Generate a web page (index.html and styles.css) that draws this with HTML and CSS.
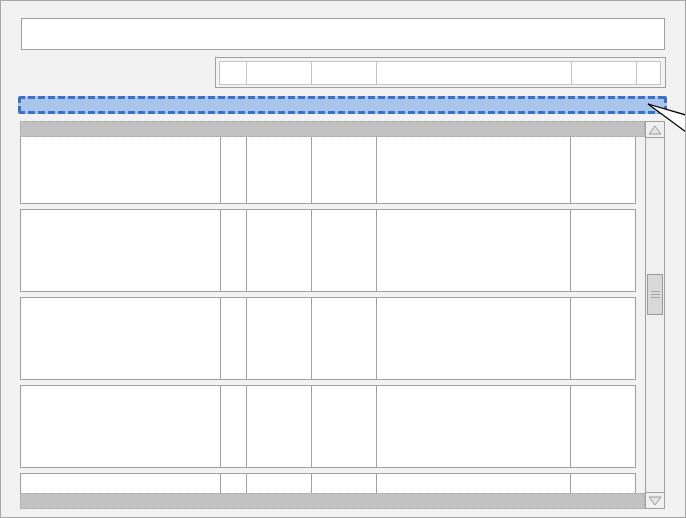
FILE: index.html
```html
<!DOCTYPE html>
<html lang="en">
<head>
    <meta charset="UTF-8">
    <title>Grid Layout</title>
    <link rel="stylesheet" href="styles.css">
</head>
<body>
    <div class="frame">
        <div class="title-box"></div>

        <div class="header-wrap">
            <div class="header-row">
                <div class="hcell w27"></div>
                <div class="hcell w64"></div>
                <div class="hcell w65"></div>
                <div class="hcell w195"></div>
                <div class="hcell w65"></div>
                <div class="hcell fill"></div>
            </div>
        </div>

        <div class="selection"></div>

        <div class="grid">
            <div class="grid-main">
                <div class="strip"></div>
                <div class="grid-body">
                    <div class="row first">
                        <div class="cell c1"></div><div class="cell c2"></div><div class="cell c3"></div><div class="cell c4"></div><div class="cell c5"></div><div class="cell c6"></div>
                    </div>
                    <div class="row">
                        <div class="cell c1"></div><div class="cell c2"></div><div class="cell c3"></div><div class="cell c4"></div><div class="cell c5"></div><div class="cell c6"></div>
                    </div>
                    <div class="row">
                        <div class="cell c1"></div><div class="cell c2"></div><div class="cell c3"></div><div class="cell c4"></div><div class="cell c5"></div><div class="cell c6"></div>
                    </div>
                    <div class="row">
                        <div class="cell c1"></div><div class="cell c2"></div><div class="cell c3"></div><div class="cell c4"></div><div class="cell c5"></div><div class="cell c6"></div>
                    </div>
                    <div class="row">
                        <div class="cell c1"></div><div class="cell c2"></div><div class="cell c3"></div><div class="cell c4"></div><div class="cell c5"></div><div class="cell c6"></div>
                    </div>
                </div>
                <div class="strip"></div>
            </div>

            <div class="scrollbar">
                <div class="sb-btn top">
                    <svg width="14" height="10" viewBox="0 0 14 10"><polygon points="7,1 13,9 1,9" fill="#e4e4e4" stroke="#9a9a9a" stroke-width="1"/></svg>
                </div>
                <div class="sb-track">
                    <div class="thumb">
                        <span></span><span></span><span></span>
                    </div>
                </div>
                <div class="sb-btn bottom">
                    <svg width="14" height="10" viewBox="0 0 14 10"><polygon points="1,1 13,1 7,9" fill="#e4e4e4" stroke="#9a9a9a" stroke-width="1"/></svg>
                </div>
            </div>
        </div>

        <!-- callout pointer -->
        <svg class="pointer" width="40" height="32" viewBox="0 0 40 32">
            <polygon points="2,2 40,13 40,30" fill="#fff" stroke="#000" stroke-width="1.3"/>
        </svg>
    </div>
</body>
</html>
```

FILE: styles.css
```css
* {
    margin: 0;
    padding: 0;
    box-sizing: border-box;
}

body {
    font-family: 'Liberation Sans', Arial, sans-serif;
    background: #f0f0f0;
}

.frame {
    position: relative;
    width: 686px;
    height: 518px;
    border: 1px solid #a6a6a6;
    background: #f2f2f2;
    overflow: hidden;
}

.title-box {
    height: 32px;
    margin: 17px 20px 0 20px;
    background: #fff;
    border: 1px solid #a0a0a0;
}

.header-wrap {
    width: 451px;
    height: 31px;
    margin: 7px 19px 0 auto;
    border: 1px solid #a0a0a0;
    padding: 3px 4px 2px 3px;
}

.header-row {
    display: flex;
    height: 24px;
    background: #fff;
    border: 1px solid #c4c4c4;
}

.hcell {
    height: 100%;
    border-left: 1px solid #c4c4c4;
}

.hcell:first-child {
    border-left: none;
}

.w27 { width: 26px; }
.w64 { width: 65px; }
.w65 { width: 65px; }
.w195 { width: 195px; }
.fill { flex: 1; }

/* dashed selection, drawn with gradients so the dashes are thick and long */
.selection {
    width: 649px;
    height: 18px;
    margin: 8px 0 0 17px;
    border-radius: 2px;
    background:
        repeating-linear-gradient(90deg, #3a72c8 0 7px, transparent 7px 10px) left top / 100% 3px no-repeat,
        repeating-linear-gradient(90deg, #3a72c8 0 7px, transparent 7px 10px) left bottom / 100% 3px no-repeat,
        repeating-linear-gradient(180deg, #3a72c8 0 7px, transparent 7px 10px) left top / 3px 100% no-repeat,
        repeating-linear-gradient(180deg, #3a72c8 0 7px, transparent 7px 10px) right top / 3px 100% no-repeat,
        #aac5eb;
}

.grid {
    display: flex;
    width: 645px;
    height: 388px;
    margin: 7px 0 0 19px;
}

.grid-main {
    display: flex;
    flex-direction: column;
    width: 625px;
}

.strip {
    height: 16px;
    background: #c2c2c2;
    border: 1px dotted #a4a4a4;
}

.grid-body {
    height: 356px;
    overflow: hidden;
    display: flex;
    flex-direction: column;
    gap: 5px;
}

.row {
    display: flex;
    flex-shrink: 0;
    width: 616px;
    height: 83px;
    background: #fff;
    border: 1px solid #a0a0a0;
}

.row.first {
    margin-top: -16px;
}

.cell {
    height: 100%;
    border-left: 1px solid #a0a0a0;
}

.cell.c1 { width: 199px; border-left: none; }
.cell.c2 { width: 26px; }
.cell.c3 { width: 65px; }
.cell.c4 { width: 65px; }
.cell.c5 { width: 194px; }
.cell.c6 { flex: 1; }

.scrollbar {
    display: flex;
    flex-direction: column;
    width: 20px;
    background: #f0f0f0;
    border: 1px solid #a0a0a0;
}

.sb-btn {
    display: flex;
    align-items: center;
    justify-content: center;
    height: 16px;
    flex-shrink: 0;
}

.sb-btn.top {
    border-bottom: 1px solid #a0a0a0;
}

.sb-btn.bottom {
    border-top: 1px solid #a0a0a0;
}

.sb-track {
    flex: 1;
    padding: 136px 1px 0 1px;
}

.thumb {
    display: flex;
    flex-direction: column;
    align-items: center;
    justify-content: center;
    gap: 2px;
    height: 41px;
    background: #d9d9d9;
    border: 1px solid #9a9a9a;
}

.thumb span {
    display: block;
    width: 9px;
    height: 1px;
    background: #a8a8a8;
}

.pointer {
    position: absolute;
    top: 101px;
    right: -1px;
}
```
